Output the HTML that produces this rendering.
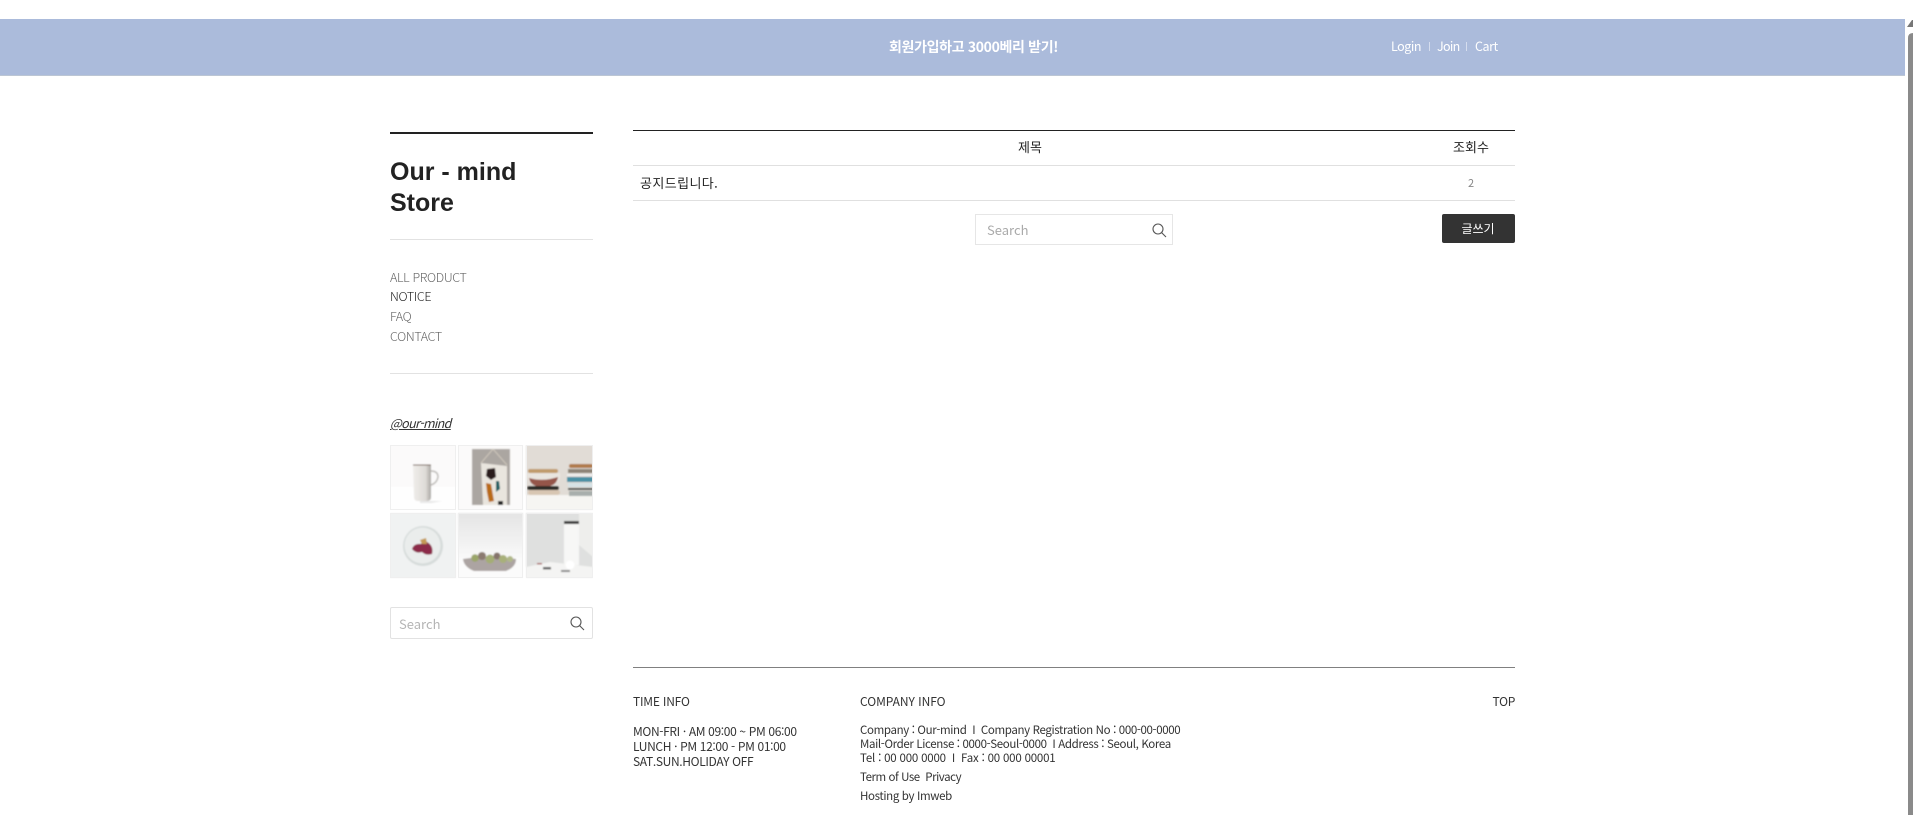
<!DOCTYPE html>
<html lang="ko"><head><meta charset="utf-8"><title>Our - mind Store</title>
<style>
html,body{margin:0;padding:0;background:#fff;width:1913px;height:815px;overflow:hidden}
body{font-family:"Noto Sans CJK KR","Liberation Sans",sans-serif;color:#222;position:relative}
.t{position:absolute;white-space:nowrap;line-height:16px;height:16px}
.r{position:absolute}
.c{transform:translateX(-50%)}
.f{font-size:12px;color:#333;letter-spacing:-.3px}
.s{font-size:11.5px;letter-spacing:-.36px}
.n{font-size:12.5px;color:#666;left:390px;font-weight:300;letter-spacing:-.35px}
</style></head><body>
<div class="r" style="left:0;top:19px;width:1905px;height:57px;background:#abbbdb;border-bottom:1px solid #bcc6d4;box-sizing:border-box"></div>
<div class="t" style="left:889px;top:38.500px;font-size:14px;font-weight:700;color:#fff;letter-spacing:-.34px">회원가입하고 3000베리 받기!</div>
<div class="t" style="left:1391px;top:38px;font-size:12.500px;color:#fff;letter-spacing:-.45px">Login</div>
<div class="r" style="left:1429px;top:42px;width:1px;height:9px;background:#d5ddee"></div>
<div class="t" style="left:1437px;top:38px;font-size:12.500px;color:#fff;letter-spacing:-.7px">Join</div>
<div class="r" style="left:1466px;top:42px;width:1px;height:9px;background:#d5ddee"></div>
<div class="t" style="left:1475px;top:38px;font-size:12.500px;color:#fff;letter-spacing:-.45px">Cart</div>

<svg class="r" style="left:1907px;top:18px" width="6" height="797"><path d="M0 9L5 2H6V9Z" fill="#777"/><path d="M1 20Q1 15 6 15V797H1Z" fill="#8a8a8a"/></svg>

<div class="r" style="left:390px;top:132px;width:203px;height:2px;background:#222"></div>
<div class="r" style="left:390px;top:157px;font:bold 25px/30.5px 'Liberation Sans',sans-serif;color:#222">Our - mind<br>Store</div>
<div class="r" style="left:390px;top:239px;width:203px;height:1px;background:#e2e2e2"></div>
<div class="t n" style="top:269px">ALL PRODUCT</div>
<div class="t n" style="top:288px;color:#222">NOTICE</div>
<div class="t n" style="top:308px">FAQ</div>
<div class="t n" style="top:328px">CONTACT</div>
<div class="r" style="left:390px;top:373px;width:203px;height:1px;background:#e2e2e2"></div>
<div class="t" style="left:390px;top:415px;font-size:12.5px;font-style:italic;color:#333;text-decoration:underline;letter-spacing:-.65px">@our-mind</div>

<svg class="r" style="left:390px;top:445px" width="203" height="134" viewBox="0 0 203 134">
<defs><filter id="b" x="-10%" y="-10%" width="120%" height="120%"><feGaussianBlur stdDeviation=".8"/></filter>
<linearGradient id="g5" x1="0" y1="0" x2="0" y2="1"><stop offset="0" stop-color="#e4e4e4"/><stop offset=".75" stop-color="#fbfbfb"/></linearGradient>
<linearGradient id="m" x1="0" y1="0" x2="1" y2="0"><stop offset="0" stop-color="#efedea"/><stop offset=".7" stop-color="#dedbd7"/><stop offset="1" stop-color="#a9a6a2"/></linearGradient></defs>
<g filter="url(#b)">
<rect width="66" height="65" fill="#fbfafa"/><rect y="42" width="66" height="23" fill="#fefefe"/>
<path d="M23 20H41V52Q41 56 37 56H28Q24 56 24 52Z" fill="url(#m)"/><path d="M23 20H41" stroke="#6b4a35" stroke-width="1"/><path d="M41 26Q48 26 48 32Q47 38 41 40" fill="none" stroke="#bdbbb8" stroke-width="1.500"/><path d="M30 56H52L42 58H30Z" fill="#e8e8e8"/>

<rect x="68" width="65" height="65" fill="#fbfafa"/><rect x="82" y="4" width="38" height="56" fill="#aba6a1"/>
<path d="M91 18L103 4L117 20" fill="none" stroke="#d8d0c2" stroke-width=".8"/>
<path d="M91 18L117 21V60H93Z" fill="#e9e5de"/><path d="M97 24L105 23L106 32L101 35L96 31Z" fill="#2a1a1e"/><path d="M106 36L109 36L110 44L106 47Z" fill="#1b5e62"/><path d="M96 38L101 39L104 56L99 57L97 47Z" fill="#b96b16"/><path d="M108 56L113 56L113 60L108 60Z" fill="#222"/>

<rect x="136" width="67" height="65" fill="#e1dcd6"/><rect x="136" y="50" width="67" height="15" fill="#f6f5f2"/>
<rect x="138" y="24" width="30" height="4" rx="2" fill="#c09a6b"/><path d="M137 28H170Q171 33 168 37H139Q136 33 137 28Z" fill="#e9e5df"/><path d="M139 33Q153 37 168 32Q167 39 160 41H146Q140 39 139 33Z" fill="#94554a"/><rect x="137" y="41" width="32" height="4" rx="2" fill="#2c2a28"/><rect x="138" y="45" width="32" height="5" rx="2.500" fill="#d8c6b2"/>
<rect x="179" y="19" width="24" height="4" rx="2" fill="#b07a4c"/><rect x="178" y="24" width="25" height="4" fill="#8b8274"/><rect x="177" y="29" width="26" height="2" fill="#eee"/><rect x="177" y="32" width="26" height="5" fill="#4a90a4"/><rect x="178" y="38" width="25" height="4" fill="#d6e2e5"/><rect x="178" y="43" width="25" height="2" fill="#3a4240"/><rect x="179" y="46" width="24" height="5" fill="#a8aeac"/>

<rect y="68" width="66" height="65" fill="#f0f2f2"/><circle cx="33" cy="101" r="20" fill="#d6dbda"/><circle cx="32.500" cy="100.500" r="18" fill="#eaedec"/><path d="M22 104Q24 98 31 99L34 94L37 97Q44 101 42 109Q36 111 32 107Q26 109 22 104Z" fill="#8c2b4a"/><path d="M30 95L36 93L37 99L32 99Z" fill="#c49a55"/>

<rect x="68" y="68" width="65" height="65" fill="url(#g5)"/><path d="M73 114Q100 110 126 114Q126 122 116 126H84Q74 122 73 114Z" fill="#aca4a2"/><circle cx="85" cy="113" r="3.800" fill="#9ba66b"/><circle cx="92" cy="111" r="4" fill="#8b7a70"/><circle cx="100" cy="114" r="4.500" fill="#a4ad75"/><circle cx="107" cy="111" r="3.500" fill="#85736b"/><circle cx="113" cy="114" r="4" fill="#a8b07a"/><circle cx="120" cy="114" r="3" fill="#b0b888"/>

<rect x="136" y="68" width="67" height="65" fill="#dfe0df"/><path d="M189 68H203V112L189 100Z" fill="#eeeeec"/><rect x="174" y="76" width="15" height="44" fill="#f7f7f6"/><rect x="174" y="76" width="15" height="3" fill="#3a3a3a"/><path d="M136 122L160 117L203 122V133H136Z" fill="#f4f4f3"/><circle cx="180" cy="120" r="4.500" fill="#fff"/><rect x="153" y="122" width="8" height="2.500" fill="#666"/><rect x="171" y="125" width="9" height="2" fill="#888"/><rect x="147" y="118" width="5" height="1.500" fill="#a66"/>
</g>
<g fill="none" stroke="#efefef"><rect x=".5" y=".5" width="65" height="64"/><rect x="68.500" y=".5" width="64" height="64"/><rect x="136.500" y=".5" width="66" height="64"/><rect x=".5" y="68.500" width="65" height="64"/><rect x="68.500" y="68.500" width="64" height="64"/><rect x="136.500" y="68.500" width="66" height="64"/></g>
</svg>

<div class="r" style="left:390px;top:607px;width:203px;height:32px;border:1px solid #e2e2e2;border-radius:2px;box-sizing:border-box"></div>
<div class="t" style="left:399px;top:616px;font-size:13px;color:#b5b5b5">Search</div>
<svg class="r" style="left:570px;top:616px" width="15" height="15" fill="none" stroke="#555" stroke-width="1.100"><circle cx="6" cy="6" r="5"/><path d="M9.500 9.500L14 14"/></svg>

<div class="r" style="left:633px;top:130px;width:882px;height:1px;background:#222"></div>
<div class="t c" style="left:1030px;top:139px;font-size:13px;color:#222">제목</div>
<div class="t c" style="left:1471px;top:139px;font-size:13px;color:#222">조회수</div>
<div class="r" style="left:633px;top:165px;width:882px;height:1px;background:#e0e0e0"></div>
<div class="t" style="left:640px;top:175px;font-size:13px;color:#222;letter-spacing:.4px">공지드립니다.</div>
<div class="t c" style="left:1471px;top:175px;font-size:11px;color:#888">2</div>
<div class="r" style="left:633px;top:200px;width:882px;height:1px;background:#e0e0e0"></div>
<div class="r" style="left:975px;top:214px;width:198px;height:31px;border:1px solid #e6e6e6;box-sizing:border-box"></div>
<div class="t" style="left:987px;top:222px;font-size:13px;color:#aaa">Search</div>
<svg class="r" style="left:1152px;top:223px" width="15" height="15" fill="none" stroke="#555" stroke-width="1.100"><circle cx="6" cy="6" r="5"/><path d="M9.500 9.500L14 14"/></svg>
<div class="r" style="left:1442px;top:214px;width:73px;height:29px;background:#333;border-radius:2px"></div>
<div class="t c" style="left:1478px;top:221px;font-size:12px;color:#fff">글쓰기</div>

<div class="r" style="left:633px;top:667px;width:882px;height:1px;background:#808080"></div>
<div class="t f" style="left:633px;top:694px;letter-spacing:-.2px">TIME INFO</div>
<div class="t f" style="left:860px;top:694px;letter-spacing:-.05px">COMPANY INFO</div>
<div class="t f" style="right:398px;top:694px">TOP</div>
<div class="t f" style="left:633px;top:723.500px;letter-spacing:-.35px">MON-FRI · AM 09:00 ~ PM 06:00</div>
<div class="t f" style="left:633px;top:738.500px;letter-spacing:-.35px">LUNCH · PM 12:00 - PM 01:00</div>
<div class="t f" style="left:633px;top:753.500px;letter-spacing:-.35px">SAT.SUN.HOLIDAY OFF</div>
<div class="t f s" style="left:860px;top:722px">Company : Our-mind &nbsp;I&nbsp; Company Registration No : 000-00-0000</div>
<div class="t f s" style="left:860px;top:736px">Mail-Order License : 0000-Seoul-0000 &nbsp;I Address : Seoul, Korea</div>
<div class="t f s" style="left:860px;top:750px;letter-spacing:-.2px">Tel : 00 000 0000 &nbsp;I&nbsp; Fax : 00 000 00001</div>
<div class="t f s" style="left:860px;top:768.500px;letter-spacing:-.45px">Term of Use &nbsp;Privacy</div>
<div class="t f s" style="left:860px;top:787.500px">Hosting by Imweb</div>
</body></html>
